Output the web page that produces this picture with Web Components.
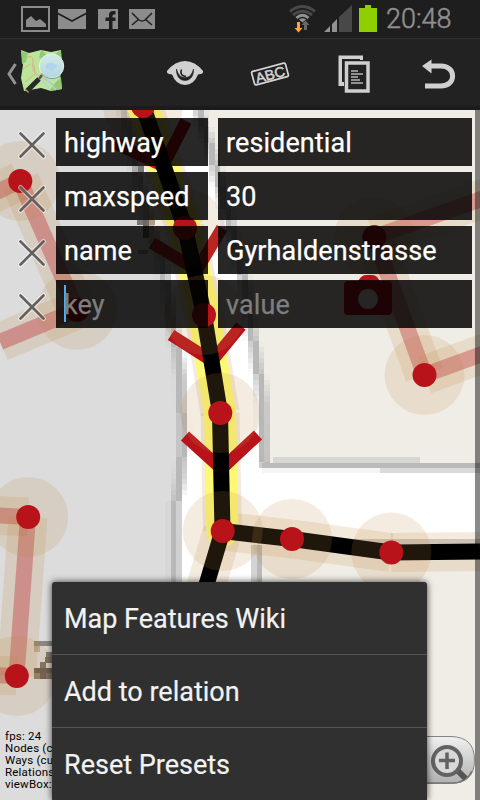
<!DOCTYPE html>
<html lang="en"><head><meta charset="utf-8"><title>Map editor</title>
<style>html,body{margin:0;height:100%;overflow:hidden;background:#dcdcdc}body{font-family:Roboto,"Noto Sans",sans-serif}</style></head>
<body><map-app></map-app>
<script>
const define=(name,html,init)=>customElements.define(name,class extends HTMLElement{
 constructor(){super();this.attachShadow({mode:'open'}).innerHTML=html;}
 connectedCallback(){if(init)init.call(this,this.shadowRoot);}
});

define('status-bar',`<style>
:host{display:flex;height:39px;background:#1e1e1e;border-bottom:1px solid #303030;box-sizing:border-box;justify-content:space-between;color:#8f8f8f}
svg{display:block;flex:none}.right{display:flex}.clock{font-size:27px;line-height:38px;width:94px;letter-spacing:0;font-weight:300;-webkit-text-stroke:.5px #8f8f8f}
</style>
<svg width="170" height="37" viewBox="0 0 170 37">
<rect x="22" y="7" width="27" height="24" fill="none" stroke="#8c8c8c" stroke-width="2"/>
<path d="M26 27V20L31 16 36 21 40 19 46 24V27Z" fill="#8c8c8c"/>
<path d="M58 9H86V29H58Z" fill="#8c8c8c"/><path d="M58 13.500L72 21 86 13.500" fill="none" stroke="#1e1e1e" stroke-width="1.700"/>
<path d="M98 9H118V29H98Z" fill="#8c8c8c"/><path d="M109 29V21H105.500V17.500H109V15Q109 11 113 11H115.500V14.500H114Q112.500 14.500 112.500 16V17.500H115.500V21H112.500V29Z" fill="#1e1e1e"/>
<path d="M129 9H155V29H129Z" fill="#8c8c8c"/><path d="M132 13L139 20Q142 22 145 20L152 13M132 25L139 19M152 25L145 19" fill="none" stroke="#1e1e1e" stroke-width="1.500"/>
</svg>
<div class="right"><svg width="98" height="37" viewBox="288 0 98 37">
<g fill="none"><path d="M290 11.500Q302.500 1.500 315 11.500" stroke="#484848" stroke-width="3"/><path d="M293 15Q302.500 7.500 312 15" stroke="#484848" stroke-width="3"/><path d="M296.500 18Q302.500 12.500 308.500 18" stroke="#929292" stroke-width="3"/></g>
<path d="M299 19.500Q302.500 17 306 19.500L302.500 22.500Z" fill="#929292"/>
<path d="M297 22h3v6h2.500L298.500 32.500 294.500 28H297Z" fill="#ffa22e"/><path d="M304 30V25H301.500L305.500 20.500 309.500 25H307V30Z" fill="#686868"/>
<path d="M324 32L330 26V32Z M332 24L337 19V32H332Z" fill="#929292"/><path d="M339 17L352 5V32H339Z" fill="#484848"/>
<path d="M359 8H365V5H371V8H377V32H359Z" fill="#8fcf00"/></svg><span class="clock">20:48</span></div>`);

define('tool-bar',`<style>
:host{display:block;height:71px;background:#222;box-sizing:border-box;border-bottom:4px solid #1b1b1b}svg{display:block}text{font:14px "Liberation Sans",sans-serif}
</style><svg width="480" height="67" viewBox="0 39 480 67">
<defs><linearGradient id="glass" x2="0" y2="1"><stop stop-color="#d3ebe6"/><stop offset="1" stop-color="#b3d8de"/></linearGradient></defs>
<path d="M15.500 64L9 74 15.500 84" fill="none" stroke="#929292" stroke-width="3"/>
<path d="M21 50L29 53 41 50 51 52 61 50 62 63 60 74 62 89 51 91 41 88 24 91 21 78 23 65Z" fill="#bde59a"/>
<path d="M41 50L50 57 61 50 61 61 39 58Z M49 91L56 82 61 77 62 89Z M21 51L28 53 26 62 22 64Z" fill="#8ecb77"/>
<path d="M24 59Q34 53 33 62T36 74L46 80 60 89M25 82L35 74 34 65M23 69L30 64" fill="none" stroke="#dcae8c"/>
<path d="M42 80L49 88M45 77L56 90" stroke="#a9d3df" stroke-width="1.500"/>
<circle cx="51.500" cy="66" r="12.200" fill="url(#glass)" stroke="#e6f1ee" stroke-width="1"/><path d="M45 68Q47 61 53 63L58 66 52 71Z" fill="#b3d3ee"/><path d="M41.500 73A12.800 12.800 0 0 0 61 75" fill="none" stroke="#6d8584" stroke-width=".8"/>
<path d="M42 75L39 79" stroke="#555" stroke-width="2.500"/><path d="M39 79L27 91" stroke="#292929" stroke-width="5"/><path d="M25.500 89.500L28.500 92.500" stroke="#c3a54a" stroke-width="1.300"/>
<path d="M167 71Q175 61 185 61T203 71Q204 74 198 74.500Q194 85 185 85T172 74.500Q166 74 167 71Z" fill="#d0d0d0"/>
<path d="M176.500 69C176 76 180 80.500 185 80.500S194 76 193.500 69C192 74 190 77.500 185 77.500S178 74 176.500 69Z" fill="#222" stroke="#222" stroke-width=".6"/>
<path d="M181.500 69.500C179.500 74 183 77 186 76" fill="none" stroke="#222" stroke-width="1.500"/>
<g transform="rotate(-15 270 74)"><rect x="252.500" y="67" width="35" height="14" rx="1.500" fill="none" stroke="#d4d4d4" stroke-width="1.700"/><text x="255" y="79.500" fill="#d4d4d4" textLength="30" lengthAdjust="spacingAndGlyphs" stroke="#d4d4d4" stroke-width=".5">ABC</text></g>
<path d="M338.500 55.500H363V60H360V59H342V82H344V86H338.500Z" fill="#d0d0d0"/>
<rect x="346.500" y="63" width="21.500" height="28" fill="#222" stroke="#d0d0d0" stroke-width="3.500"/>
<path d="M351 71H358M351 74H363M351 77H358M351 80H360M351 83H363" stroke="#b5b5b5" stroke-width="1.300"/>
<path d="M431 66H441C456.500 66 456.500 86 441 86H425" fill="none" stroke="#d0d0d0" stroke-width="5"/><path d="M422 66L431.500 59.500V73.500Z" fill="#d0d0d0"/>
</svg>`);

define('map-canvas',`<style>:host{display:block;height:690px}svg{display:block}text{font-size:11.500px}</style>
<svg width="480" height="690" viewBox="0 110 480 690">
<rect y="110" width="480" height="690" fill="#dcdcdc"/><g id="tiles" shape-rendering="crispEdges"></g>
<g id="ways" fill="none"></g>
<g id="nodes"></g>
<path d="M358 281L361 277Q363 275 366 275H372Q375 275 377 277L380 281H388Q392 281 392 285V311Q392 315 388 315H348Q344 315 344 311V285Q344 281 348 281Z M368 289a10 10 0 1 0 .1 0Z" fill="#b8131a" fill-rule="evenodd"/>
<rect x="475" y="110" width="5" height="690" opacity=".46"/>
<g style="letter-spacing:.2px" fill="#000"><text x="5" y="740">fps: 24</text><text x="5" y="752">Nodes (c</text><text x="5" y="764">Ways (cu</text><text x="5" y="776">Relations</text><text x="5" y="788">viewBox:</text></g>
<defs><linearGradient id="btn" x2="0" y2="1"><stop stop-color="#f0f0f0"/><stop offset="1" stop-color="#b0b0b0"/></linearGradient></defs>
<path d="M400 736.500H451Q474.500 737 474.500 760T451 783.500H400Z" fill="url(#btn)" stroke="#848484"/>
<path d="M420 783H452Q466 783 472 771" fill="none" stroke="#777" stroke-width="1.500"/>
<path d="M457 770L465.500 778.500" stroke="#555" stroke-width="6"/><circle cx="447" cy="761" r="14" fill="#d8d8d8" stroke="#626262" stroke-width="4"/>
<path d="M439 760.500H455M447 752.500V769" stroke="#626262" stroke-width="3.500"/>
</svg>`,function(root){
 const tiles=root.getElementById('tiles'),ways=root.getElementById('ways'),nodes=root.getElementById('nodes');
 const edge=(points,y)=>{let i=0;while(i<points.length-2&&points[i+1][0]<y)i++;const [a,b]=[points[i],points[i+1]];return a[1]+(b[1]-a[1])*(y-a[0])/(b[0]-a[0]);};
 const left=[[110,124],[165,136],[220,148],[260,162],[300,168],[340,175],[375,181],[450,182],[475,180],[500,175],[800,175]];
 const right=[[110,199],[145,210],[200,224],[270,242],[340,253],[380,260],[400,263],[461,264]];
 const px=5.5;let t='';
 const rect=(x,y,w,h,c)=>{t+=`<rect x="${x}" y="${y}" width="${w}" height="${h}" fill="${c}"/>`;};
 const mix=(a,b,f)=>'rgb('+a.map((v,i)=>Math.round(v+(b[i]-v)*f))+')';
 const line=[184,184,184],grey=[220,220,220],white=[255,255,255],land=[240,237,230];
 const border=(e,y,a,b)=>{const x=Math.floor(e/px)*px,f=(e-x)/px;rect(x-px,y,px,px+.5,mix(line,a,.3+f*.7));rect(x,y,px,px+.5,mix(line,a,0));rect(x+px,y,px,px+.5,mix(b,line,f*.8));};
 for(let y=110;y<800;y+=px){const l=edge(left,y);
  rect(l,y,480-l,px+.5,'#fff');border(l,y,grey,white);
  if(y<463){const r=edge(right,y);rect(r,y,480-r,px+.5,'#f0ede6');border(r,y,white,land);}
 }
 rect(273,457,147,6,'#d6d6d3');rect(262,463,218,5,'#bababa');rect(262,468,218,5,'#f5f5f5');rect(380,468,100,5,'#dadada');
 rect(251,545,6,255,'#d4d4d4');rect(257,545,5,255,'#bababa');rect(262,543,218,257,'#f0ede6');rect(257,539,223,5,'#d0d0d0');
 for(const [x,y,w,h,c] of [[132,166,6,6,'#aaa'],[138,166,6,6,'#777'],[137,220,6,5,'#777'],[143,220,6,18,'#666'],[149,220,6,5,'#aaa090'],[138,250,10,4,'#999'],[34,641,18,5,'#8b8782'],[34,646,6,6,'#b8ada0'],[46,652,6,10,'#827b71'],[40,662,6,6,'#7a7066'],[45,657,7,6,'#766d63'],[34,668,18,5,'#63594e'],[34,673,6,6,'#8c7d69'],[40,673,6,6,'#655b50'],[46,673,6,6,'#7a7066']])rect(x,y,w,h,c);
 tiles.innerHTML=t;
 const selected='M143 106L185 228L204 315L220 413L222.500 531';
 const hazed=['M143 106L185 228','M185 228L204 315','M204 315L220 413','M220 413L222.500 531','M222.500 531L292 539','M292 539L391 552.500','M391 552.500L480 551.500','M222.500 531L190 640',
  'M-20 200L20 181','M20 181L77 310','M77 310L0 342','M-10 515L28 517','M28 517L16.500 676','M16.500 676L-10 675','M374 237L490 196','M374 237L424.500 375','M424.500 375L490 351'];
 let w='';
 hazed.forEach((d,i)=>{w+=`<path d="${d}" stroke="#b97e2f" stroke-opacity=".155" stroke-width="39"/>`;if(i>7)w+=`<path d="${d}" stroke="#b8131a" stroke-opacity=".33" stroke-width="16"/>`;});
 w+=`<path d="${selected}" stroke="#fdf974" stroke-width="32" stroke-linejoin="round" stroke-linecap="round"/>`;
 w+=`<path d="M115 143L163 166L186 121M152 243L197 270L222 228M171 335L212 361L241 326M185 436L221.500 469L258 435" stroke="#b8131a" stroke-width="12"/>`;
 w+=`<path d="${selected}M222.500 531L292 539L391 552.500L480 551.500M222.500 531L190 640" stroke="#000" stroke-width="16" stroke-linejoin="round"/>`;
 ways.innerHTML=w;
 const pts=[[143,106],[185,228],[204,315],[220.3,413],[222.7,531],[292,539],[391.3,552.5],[20.3,181],[77,310],[28.2,517],[16.8,676],[374.3,237],[424.5,375]];
 nodes.innerHTML=pts.map(([x,y])=>`<circle cx="${x}" cy="${y}" r="40" fill="#c08a4a" fill-opacity=".165"/>`).join('')+pts.map(([x,y])=>`<circle cx="${x}" cy="${y}" r="12" fill="#b8131a"/>`).join('');
});

define('tag-row',`<style>:host{display:grid;grid-template-columns:56px 152px 254px;height:48px;color:#fff;font-size:27px;line-height:50px;letter-spacing:.1px;-webkit-text-stroke:.25px currentColor}
.field{background:rgba(0,0,0,.845);height:48px;padding-left:8px;white-space:nowrap;box-sizing:border-box}.value{margin-left:10px;width:254px}
:host([empty]){color:#7e7e7e}:host([empty]) .key{background:linear-gradient(#55aaf0,#55aaf0) 8px 5px/2px 37px no-repeat,rgba(0,0,0,.845)}
svg{display:block}</style>
<svg width="56" height="48" viewBox="0 0 56 48"><path d="M20.500 15.500L43.500 38.500M43.500 15.500L20.500 38.500" stroke="#fff" stroke-opacity=".5" stroke-width="5" stroke-linecap="round"/><path d="M20.500 15.500L43.500 38.500M43.500 15.500L20.500 38.500" stroke="#66605c" stroke-width="2.700" stroke-linecap="round"/></svg>
<div class="field key"><slot name="key"></slot></div><div class="field value"><slot name="value"></slot></div>`);

define('tag-editor',`<style>:host{display:flex;flex-direction:column;gap:6px;padding-top:8px;position:absolute;top:110px;left:0}</style><slot></slot>`);
define('menu-item',`<style>:host{display:block;height:72px;line-height:75px;padding-left:12px;font-size:27px;color:#f2f2f2;border-bottom:1px solid #555;white-space:nowrap;-webkit-text-stroke:.2px #f2f2f2}</style><slot></slot>`);
define('context-menu',`<style>:host{display:block;position:absolute;left:52px;top:582px;width:375px;height:218px;overflow:hidden;background:#303030;border-radius:3px 3px 0 0;box-shadow:0 0 7px rgba(0,0,0,.75);}</style><slot></slot>`);
define('map-app',`<style>:host{display:flex;flex-direction:column;position:relative;width:480px;height:800px;overflow:hidden}</style>
<status-bar></status-bar><tool-bar></tool-bar><map-canvas></map-canvas>
<tag-editor><tag-row><span slot="key">highway</span><span slot="value">residential</span></tag-row>
<tag-row><span slot="key">maxspeed</span><span slot="value">30</span></tag-row>
<tag-row><span slot="key">name</span><span slot="value">Gyrhaldenstrasse</span></tag-row>
<tag-row empty><span slot="key">key</span><span slot="value">value</span></tag-row></tag-editor>
<context-menu><menu-item>Map Features Wiki</menu-item><menu-item>Add to relation</menu-item><menu-item>Reset Presets</menu-item></context-menu>`);
</script></body></html>
